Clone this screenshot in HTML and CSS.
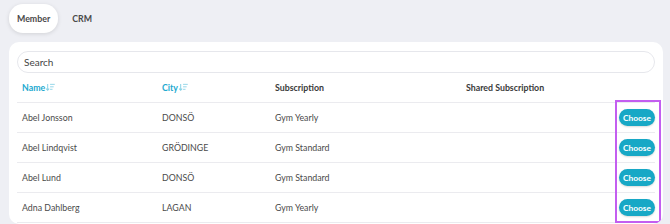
FILE: index.html
```html
<!DOCTYPE html>
<html>
<head>
<meta charset="utf-8">
<link rel="stylesheet" href="styles.css">
</head>
<body>
<div class="tabs">
  <div class="tab active">Member</div>
  <div class="tab">CRM</div>
</div>
<div class="card">
  <div class="search">Search</div>
  <div class="table">
    <div class="row head">
      <div class="c c1 sort">Name<svg class="si" viewBox="0 0 8 8" width="9" height="9"><path d="M1.5 0.8v5.6M0.2 5l1.3 1.5 1.3-1.5" stroke="currentColor" stroke-width="0.9" fill="none"/><path d="M3.6 1.2h4.2M3.6 3.4h3.2M3.6 5.6h2.2" stroke="currentColor" stroke-width="0.8"/></svg></div>
      <div class="c c2 sort">City<svg class="si" viewBox="0 0 8 8" width="9" height="9"><path d="M1.5 0.8v5.6M0.2 5l1.3 1.5 1.3-1.5" stroke="currentColor" stroke-width="0.9" fill="none"/><path d="M3.6 1.2h4.2M3.6 3.4h3.2M3.6 5.6h2.2" stroke="currentColor" stroke-width="0.8"/></svg></div>
      <div class="c c3">Subscription</div>
      <div class="c c4">Shared Subscription</div>
      <div class="c c5"></div>
    </div>
    <div class="row">
      <div class="c c1">Abel Jonsson</div>
      <div class="c c2">DONSÖ</div>
      <div class="c c3">Gym Yearly</div>
      <div class="c c4"></div>
      <div class="c c5"><button class="btn">Choose</button></div>
    </div>
    <div class="row">
      <div class="c c1">Abel Lindqvist</div>
      <div class="c c2">GRÖDINGE</div>
      <div class="c c3">Gym Standard</div>
      <div class="c c4"></div>
      <div class="c c5"><button class="btn">Choose</button></div>
    </div>
    <div class="row">
      <div class="c c1">Abel Lund</div>
      <div class="c c2">DONSÖ</div>
      <div class="c c3">Gym Standard</div>
      <div class="c c4"></div>
      <div class="c c5"><button class="btn">Choose</button></div>
    </div>
    <div class="row">
      <div class="c c1">Adna Dahlberg</div>
      <div class="c c2">LAGAN</div>
      <div class="c c3">Gym Yearly</div>
      <div class="c c4"></div>
      <div class="c c5"><button class="btn">Choose</button></div>
    </div>
    <div class="highlight"></div>
  </div>
</div>
</body>
</html>
```
FILE: styles.css
```css
html, body {
  margin: 0;
  padding: 0;
  background: #eeeff4;
  font-family: "Lato", "Open Sans", "Liberation Sans", sans-serif;
  color: #4a4a4a;
  height: 224px;
  overflow: hidden;
}
.tabs {
  display: flex;
  align-items: center;
  gap: 5px;
  padding: 4px 0 0 9px;
  height: 29px;
}
.tab {
  height: 29px;
  padding: 0 9px;
  display: flex;
  align-items: center;
  font-size: 8.8px;
  font-weight: 700;
  color: #4a4a4a;
  border-radius: 14px;
}
.tab.active {
  padding: 0 8px;
  background: #fff;
  box-shadow: 0 1px 4px rgba(0,0,0,0.12);
}
.card {
  margin: 9px 7px 0 9px;
  background: #fff;
  border-radius: 10px;
  padding: 9px 8px 0 8px;
  height: 173px;
  overflow: hidden;
}
.search {
  height: 20px;
  border: 1px solid #e6e7ec;
  border-radius: 11px;
  padding-left: 6px;
  display: flex;
  align-items: center;
  font-size: 10px;
  color: #444;
}
.table {
  position: relative;
}
.row {
  display: flex;
  height: 29px;
  border-bottom: 1px solid #ebebef;
  align-items: center;
}
.c {
  padding-left: 5px;
  font-size: 8.8px;
  box-sizing: border-box;
  white-space: nowrap;
}
.c1 { width: 140px; }
.c2 { width: 113px; }
.c3 { width: 191px; }
.c4 { flex: 1; }
.c5 { width: 41px; padding-left: 5px; display: flex; }
.head .c {
  font-weight: 700;
  color: #3a3a3a;
}
.head .sort {
  color: #22a9cf;
  display: flex;
  align-items: center;
}
.si {
  color: #8ad2e6;
  margin-left: 1px;
}
.btn {
  font-family: "Lato", "Open Sans", "Liberation Sans", sans-serif;
  background: #17a8c6;
  color: #fff;
  border: none;
  border-radius: 9px;
  height: 17px;
  width: 36px;
  padding: 0;
  font-size: 8.4px;
  font-weight: 700;
  box-shadow: 0 1px 2px rgba(0,0,0,0.15);
}
.highlight {
  position: absolute;
  left: 598px;
  top: 27px;
  width: 42px;
  height: 119px;
  border: 2px solid #c35ef0;
}
```
